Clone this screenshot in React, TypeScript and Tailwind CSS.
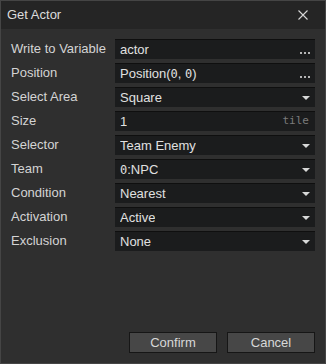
const rows: { label: string; value: string; kind: 'text' | 'dots' | 'select' | 'number' }[] = [
  { label: 'Write to Variable', value: 'actor', kind: 'dots' },
  { label: 'Position', value: 'Position(0, 0)', kind: 'dots' },
  { label: 'Select Area', value: 'Square', kind: 'select' },
  { label: 'Size', value: '1', kind: 'number' },
  { label: 'Selector', value: 'Team Enemy', kind: 'select' },
  { label: 'Team', value: '0:NPC', kind: 'select' },
  { label: 'Condition', value: 'Nearest', kind: 'select' },
  { label: 'Activation', value: 'Active', kind: 'select' },
  { label: 'Exclusion', value: 'None', kind: 'select' },
]

function Value({ text }: { text: string }) {
  // zeros are drawn in a mono face, like the slashed zero in the picture
  const parts = text.split(/(0)/)
  return (
    <span className="truncate">
      {parts.map((p, i) =>
        p === '0' ? (
          <span key={i} className="font-['DejaVu_Sans_Mono',monospace] text-[12px]">0</span>
        ) : (
          <span key={i}>{p}</span>
        )
      )}
    </span>
  )
}

function Dots() {
  return (
    <span className="flex gap-[2px] mt-[6px] mr-[-1px]">
      <span className="w-[2px] h-[2px] bg-[#b5b5b5]" />
      <span className="w-[2px] h-[2px] bg-[#b5b5b5]" />
      <span className="w-[2px] h-[2px] bg-[#b5b5b5]" />
    </span>
  )
}

function Arrow() {
  return (
    <svg width="8" height="4" viewBox="0 0 8 4" className="mr-[-1px]">
      <path d="M0 0H8L4 4Z" fill="#d8d8d8" />
    </svg>
  )
}

export default function App() {
  return (
    <div className="w-[326px] h-[364px] bg-[#2f2f2f] border border-[#454545] flex flex-col font-['Liberation_Sans',Arial,sans-serif] text-[13px] text-[#d4d4d4]">
      <div className="h-[28px] bg-[#252525] flex items-center justify-between pl-[6px] pr-[17px] shrink-0">
        <span className="text-[#dcdcdc]">Get Actor</span>
        <svg width="10" height="10" viewBox="0 0 10 10">
          <path d="M0.5 0.5L9.5 9.5M9.5 0.5L0.5 9.5" stroke="#d8d8d8" strokeWidth="1.1" />
        </svg>
      </div>
      <div className="flex-1 flex flex-col pt-[10px] pl-[10px] pr-[10px] pb-[10px]">
        <div className="flex flex-col gap-[4px]">
          {rows.map((r) => (
            <div key={r.label} className="flex items-center h-[20px]">
              <span className="w-[104px] shrink-0">{r.label}</span>
              <div className="flex-1 h-[20px] bg-[#1b1c1d] border-t border-[#0f0f0f] flex items-center justify-between pl-[5px] pr-[6px] text-[#e0e0e0]">
                <Value text={r.value} />
                {r.kind === 'dots' && <Dots />}
                {r.kind === 'select' && <Arrow />}
                {r.kind === 'number' && (
                  <span className="font-['DejaVu_Sans_Mono',monospace] text-[11px] text-[#7a7a7a]">tile</span>
                )}
              </div>
            </div>
          ))}
        </div>
        <div className="mt-auto flex justify-end gap-[10px]">
          <button className="w-[88px] h-[21px] bg-[#474747] border border-[#161616] text-[#d8d8d8] leading-none">
            Confirm
          </button>
          <button className="w-[88px] h-[21px] bg-[#474747] border border-[#161616] text-[#d8d8d8] leading-none">
            Cancel
          </button>
        </div>
      </div>
    </div>
  )
}
